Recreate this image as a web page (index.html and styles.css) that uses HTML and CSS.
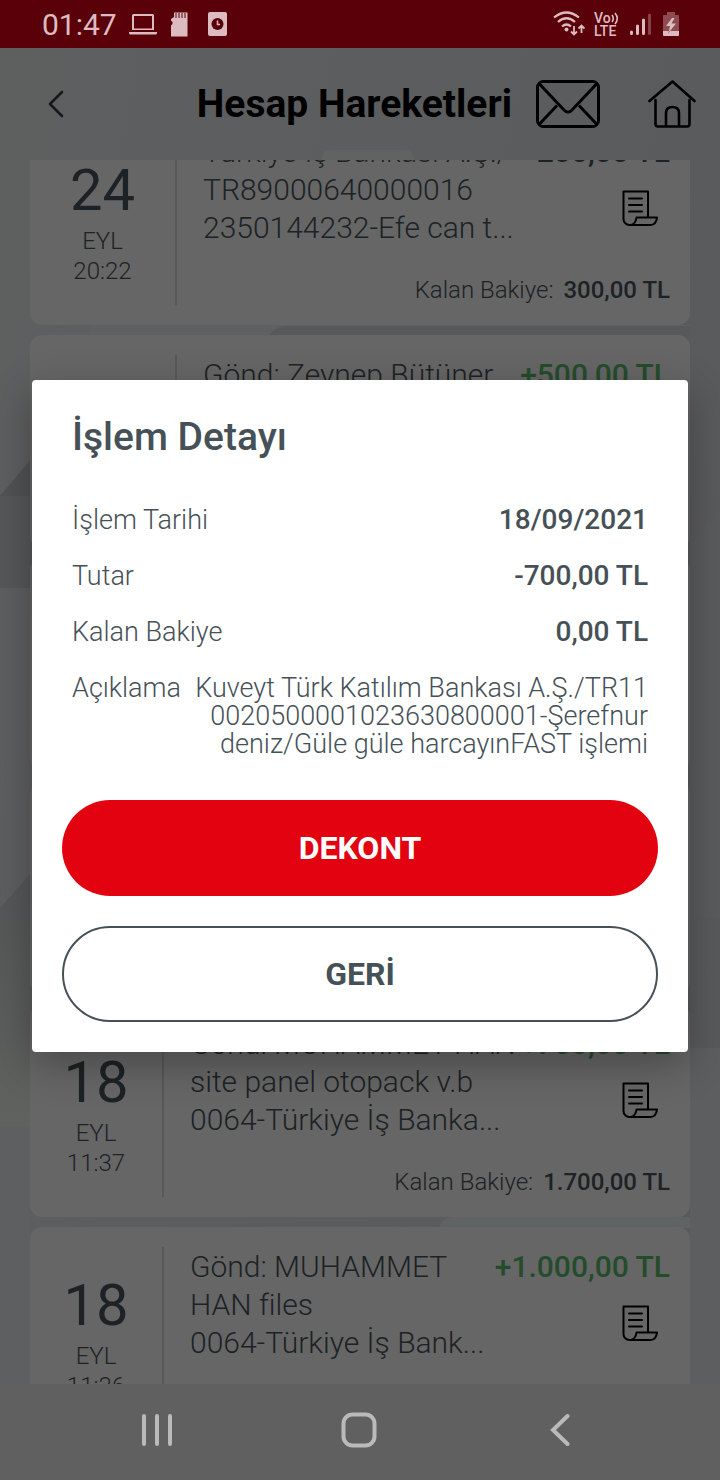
FILE: index.html
```html
<!DOCTYPE html>
<html lang="tr">
<head>
<meta charset="utf-8">
<meta name="viewport" content="width=device-width, initial-scale=1">
<title>Hesap Hareketleri</title>
<link rel="stylesheet" href="styles.css">
</head>
<body>
<svg class="symbols" aria-hidden="true">
  <symbol id="receipt" viewBox="0 0 36 36">
    <path d="M26 27V1.500H1.500V29a6 6 0 0 0 6 6h21c4 0 6-3 6.500-7.500H14.500c-.5 4-2 7-6 7.500" fill="none" stroke="currentColor" stroke-width="2" stroke-linejoin="round"/>
    <path d="M7 8.500h13M7 15h13M7 21.500h13" fill="none" stroke="currentColor" stroke-width="2" stroke-linecap="round"/>
  </symbol>
</svg>
<div class="phone">
  <div class="status">
    <div class="status-group">
      <time class="clock">01:47</time>
      <svg width="28" height="24" viewBox="0 0 28 24" fill="currentColor"><path fill-rule="evenodd" d="M4.500 2h19Q25 2 25 3.500V18H3V3.500Q3 2 4.500 2zM5 4v12.500h18V4zM0 20h28v1q0 1.500-1.500 1.500h-25Q0 22.500 0 21z"/></svg>
      <svg class="sd" width="18" height="26" viewBox="0 0 18 26"><path d="M3 1.500h13.500V25.500H0V14.500l1.500-1.500v-2L0 9.500V8l3-2z" fill="currentColor"/><path d="M5 2v5M8 2v5M11 2v5M14 2v5" stroke="#5a0008" stroke-width="1"/></svg>
      <svg class="alarm" width="20" height="24" viewBox="0 0 20 24"><rect width="19" height="24" rx="2" fill="currentColor"/><circle cx="9.500" cy="12" r="6" fill="#5a0008"/><path d="M9.500 8.500v4H12" fill="none" stroke="currentColor" stroke-width="1.500"/></svg>
    </div>
    <div class="status-group right">
      <svg width="32" height="26" viewBox="0 0 32 26" fill="none" stroke="currentColor"><path d="M1 6.500q12.500-10 25 0M5 11q8.500-7.500 17 0M9 15.500q4.500-4 9 0" stroke-width="2.200"/><circle cx="13.500" cy="18.500" r="2" fill="currentColor" stroke="none"/><path d="M21 15v8M18 20.500l3 3 3-3M28.500 22v-7M25.500 17.500l3-3 3 3" stroke-width="1.800"/></svg>
      <svg class="volte" width="26" height="26" viewBox="0 0 26 26"><text x="0" y="12" class="volte-text">Vo</text><path d="M18 4q2.500 3.500 0 7M21 2q4.500 5.500 0 11" fill="none" stroke="currentColor" stroke-width="1.600"/><text x="0" y="25" class="volte-text">LTE</text></svg>
      <svg width="24" height="24" viewBox="0 0 24 24" stroke="currentColor" stroke-width="3" stroke-linecap="round"><path d="M2.500 20v1.500M8.500 14v7.500M14.500 8v13.500"/><path d="M20.500 3v18.500" opacity=".35"/></svg>
      <svg class="battery" width="16" height="24" viewBox="0 0 16 24"><path d="M4 0h8v3h3q1 0 1 1v16H0V4q0-1 1-1h3z" fill="currentColor" opacity=".4"/><path d="M0 19h16v4q0 1-1 1H1q-1 0-1-1zM9 6L3 14h4l-1.500 7L13 11.500H8.500L11.500 6z" fill="currentColor"/></svg>
    </div>
  </div>

  <main class="screen">
    <svg class="backdrop" viewBox="0 0 720 1336" preserveAspectRatio="none" aria-hidden="true">
      <defs>
        <linearGradient id="fade" x1="0" y1="0" x2="0" y2="1"><stop offset="0" stop-color="#545657"/><stop offset="1" stop-color="#60625f"/></linearGradient>
      </defs>
      <path d="M0 448L32 410V448z" fill="#515253"/>
      <path d="M0 448H32V540H0z" fill="#565759"/>
      <path d="M0 860L32 824V1079H0z" fill="url(#fade)"/>
      <rect x="322" y="102" width="92" height="30" rx="8" fill="#616362"/>
      <path d="M90 277H690V287H90z" fill="#5f6061"/>
      <path d="M268 290q5-12 20-12H690V290z" fill="#58595b"/>
      <path d="M688 495L720 462V870H688z" fill="#5a5b5c"/>
      <path d="M0 1079H30V1336H0z" fill="#5d5f61"/>
      <path d="M438 1180q6-11 14-11H690V1180z" fill="#606363"/>
      <path d="M690 1000H720V1336H690z" fill="#5c5e60"/>
    </svg>
    <header class="header">
      <button class="icon-button" aria-label="Geri dön"><svg width="16" height="28" viewBox="0 0 16 28"><path d="M14 2L2 14l12 12" fill="none" stroke="#14191d" stroke-width="2.600" stroke-linecap="round" stroke-linejoin="round"/></svg></button>
      <h1>Hesap Hareketleri</h1>
      <button class="icon-button mail" aria-label="Mesajlar"><svg width="64" height="48" viewBox="0 0 64 48" fill="none" stroke="#000" stroke-width="3"><rect x="1.500" y="1.500" width="61" height="45" rx="6"/><path d="M3.500 4L28 30q4 4 8 0L60.500 4M3.500 44L21 25.500M60.500 44L43 25.500"/></svg></button>
      <button class="icon-button" aria-label="Ana sayfa"><svg width="48" height="48" viewBox="0 0 48 48" fill="none" stroke="#000" stroke-width="2.600" stroke-linecap="round" stroke-linejoin="round"><path d="M1.500 21L24.500 1.500L46.500 21M7.500 20v24q0 2.500 2.500 2.500h29q2.500 0 2.500-2.500V20M18 46V33q0-6 6.500-6t6.500 6v13"/></svg></button>
    </header>

    <div class="viewport">
      <ul class="list">
        <li class="card wide">
          <div class="date"><b>24</b><span>EYL</span><time>20:22</time></div>
          <div class="body">
            <div class="top"><p>Türkiye İş Bankası A.Ş./<br>TR89000640000016<br>2350144232-Efe can t...</p>
              <div class="side"><strong>-200,00 TL</strong><svg class="receipt"><use href="#receipt"/></svg></div></div>
            <div class="balance"><span>Kalan Bakiye:</span><strong>300,00 TL</strong></div>
          </div>
        </li>
        <li class="card wide">
          <div class="date"></div>
          <div class="body"><div class="top"><p>Gönd: Zeynep Bütüner</p><div class="side"><strong class="plus">+500,00 TL</strong></div></div></div>
        </li>
        <li class="card"></li>
        <li class="card"></li>
        <li class="card">
          <div class="date"><b>18</b><span>EYL</span><time>11:37</time></div>
          <div class="body">
            <div class="top"><p>Gönd: MUHAMMET HAN<br>site panel otopack v.b<br>0064-Türkiye İş Banka...</p>
              <div class="side"><strong class="plus">+700,00 TL</strong><svg class="receipt"><use href="#receipt"/></svg></div></div>
            <div class="balance"><span>Kalan Bakiye:</span><strong>1.700,00 TL</strong></div>
          </div>
        </li>
        <li class="card">
          <div class="date"><b>18</b><span>EYL</span><time>11:36</time></div>
          <div class="body">
            <div class="top"><p>Gönd: MUHAMMET<br>HAN files<br>0064-Türkiye İş Bank...</p>
              <div class="side"><strong class="plus">+1.000,00 TL</strong><svg class="receipt"><use href="#receipt"/></svg></div></div>
          </div>
        </li>
      </ul>
    </div>

    <div class="overlay">
      <section class="dialog" role="dialog" aria-modal="true" aria-labelledby="dialog-title">
        <h2 id="dialog-title">İşlem Detayı</h2>
        <dl class="details">
          <div><dt>İşlem Tarihi</dt><dd>18/09/2021</dd></div>
          <div><dt>Tutar</dt><dd>-700,00 TL</dd></div>
          <div><dt>Kalan Bakiye</dt><dd>0,00 TL</dd></div>
          <div><dt>Açıklama</dt><dd class="note">Kuveyt Türk Katılım Bankası A.Ş./TR11<br>0020500001023630800001-Şerefnur<br>deniz/Güle güle harcayınFAST işlemi</dd></div>
        </dl>
        <div class="actions">
          <button class="primary">DEKONT</button>
          <button class="secondary">GERİ</button>
        </div>
      </section>
    </div>
  </main>

  <nav class="navbar" aria-label="Sistem">
    <button aria-label="Son uygulamalar"><svg width="32" height="34" viewBox="0 0 32 34" stroke="#bababa" stroke-width="4" stroke-linecap="round"><path d="M3 3v28M16 3v28M29 3v28"/></svg></button>
    <button aria-label="Ana ekran"><svg width="36" height="36" viewBox="0 0 36 36"><rect x="2.500" y="2.500" width="31" height="31" rx="9" fill="none" stroke="#bababa" stroke-width="4"/></svg></button>
    <button aria-label="Geri"><svg width="20" height="34" viewBox="0 0 20 34"><path d="M17.500 3L3 17l14.500 14" fill="none" stroke="#bababa" stroke-width="4" stroke-linecap="round"/></svg></button>
  </nav>
</div>
</body>
</html>
```
FILE: styles.css
```css
* { box-sizing: border-box; }

body {
  margin: 0;
  font-family: Roboto, "Open Sans", sans-serif;
  font-weight: 300;
  color: #1c2225;
  background: #606060;
}

h1, h2, p, ul, dl, dd { margin: 0; padding: 0; }

button {
  padding: 0;
  border: 0;
  background: none;
  font: inherit;
  color: inherit;
}

svg { display: block; flex: none; }

.symbols { position: absolute; width: 0; height: 0; }

.phone {
  display: grid;
  grid-template-rows: 48px minmax(0, 1fr) 96px;
  height: 100vh;
}

/* System status bar */
.status {
  display: flex;
  justify-content: space-between;
  align-items: center;
  padding: 0 41px 0 42px;
  background: #5a0008;
  color: #dcbcc0;
}

.status-group { display: flex; align-items: center; gap: 12px; }
.status-group .sd { margin-left: 2px; }
.status-group .alarm { margin-left: 7px; }
.clock { font-size: 30px; font-weight: 400; }
.right { gap: 9px; }
.right .battery { margin-left: 1px; }
.volte-text { font-size: 14px; font-weight: 500; fill: currentColor; }

/* Screen */
.screen {
  position: relative;
  display: flex;
  flex-direction: column;
  min-height: 0;
  background: linear-gradient(100deg, #5e5f5f, #5b5c5e 60%, #58595b);
}

.backdrop { position: absolute; inset: 0; width: 100%; height: 100%; }

.header {
  position: relative;
  display: flex;
  align-items: center;
  height: 112px;
  flex: none;
  padding: 0 24px 0 48px;
  color: #000;
}

.header h1 {
  flex: 1;
  padding-right: 24px;
  text-align: right;
  font-size: 39px;
  font-weight: 700;
  line-height: 48px;
}

.mail { margin-right: 48px; }

.viewport { position: relative; flex: 1; min-height: 0; overflow: hidden; }

.list {
  display: flex;
  flex-direction: column;
  gap: 10px;
  margin-top: -48px;
  padding: 0 30px;
  list-style: none;
}

.card {
  display: flex;
  min-height: 213px;
  padding: 20px 20px 20px 0;
  border-radius: 12px;
  background: #666;
}

.date {
  display: flex;
  flex-direction: column;
  align-items: center;
  justify-content: center;
  width: 134px;
  flex: none;
  padding-top: 2px;
  border-right: 2px solid #585858;
  font-size: 24px;
  line-height: 30px;
}

.wide .date { width: 147px; }
.date b { font-size: 58px; font-weight: 400; line-height: 72px; }

.body {
  display: flex;
  flex: 1;
  flex-direction: column;
  justify-content: space-between;
  min-width: 0;
  padding: 1px 0 0 26px;
}

.top {
  display: flex;
  justify-content: space-between;
  font-size: 30px;
  line-height: 38px;
  white-space: nowrap;
}

.side { display: flex; flex-direction: column; align-items: flex-end; gap: 19px; }
.side strong, .balance strong { font-weight: 500; }
.side .plus { color: #244c2b; }
.receipt { width: 36px; height: 36px; margin-right: 12px; color: #000; }

.balance {
  display: flex;
  justify-content: flex-end;
  gap: 10px;
  font-size: 24px;
  line-height: 30px;
}

/* Dialog */
.overlay {
  position: absolute;
  inset: 0;
  display: flex;
  align-items: center;
  padding: 0 32px;
}

.dialog {
  flex: 1;
  min-width: 0;
  padding: 33px 30px 30px;
  border-radius: 4px;
  background: #fff;
  color: #465157;
  box-shadow: 0 12px 40px rgba(0, 0, 0, .3);
}

.dialog h2 { padding: 0 10px; font-size: 39px; font-weight: 500; line-height: 48px; }

.details {
  display: flex;
  flex-direction: column;
  gap: 28px;
  padding: 45px 10px 42px;
  font-size: 27px;
  line-height: 28px;
}

.details div { display: flex; justify-content: space-between; }
.details dd { font-size: 28px; font-weight: 500; text-align: right; white-space: nowrap; }
.details .note { font-size: 27px; font-weight: 300; }

.actions { display: flex; flex-direction: column; gap: 30px; }
.actions button { height: 96px; border-radius: 48px; font-size: 32px; font-weight: 700; }
.actions .primary { background: #e20210; color: #fff; }
.actions .secondary { border: 2px solid #465157; }

/* System navigation */
.navbar {
  display: flex;
  align-items: center;
  justify-content: space-between;
  padding: 0 120px 4px 117px;
  background: #606060;
}

.navbar button { display: flex; justify-content: center; width: 80px; }
```
